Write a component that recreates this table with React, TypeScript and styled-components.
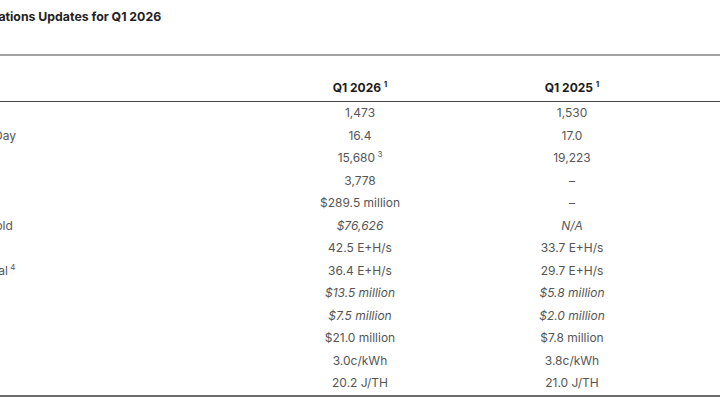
import * as React from "react"
import styled, { createGlobalStyle } from "styled-components"

interface RowType {
  label: string
  labelNote?: string
  current: string
  currentNote?: string
  prior: string
  italic?: boolean
}

const rows: RowType[] = [
  { label: "Bitcoin Mined", current: "1,473", prior: "1,530" },
  { label: "Average Bitcoin Mined Per Day", current: "16.4", prior: "17.0" },
  { label: "Bitcoin Held", current: "15,680", currentNote: "3", prior: "19,223" },
  { label: "Bitcoin Sold", current: "3,778", prior: "–" },
  { label: "Proceeds from Bitcoin Sold", current: "$289.5 million", prior: "–" },
  { label: "Average Price per Bitcoin Sold", current: "$76,626", prior: "N/A", italic: true },
  { label: "Deployed Hash Rate", current: "42.5 E+H/s", prior: "33.7 E+H/s" },
  { label: "Operational Hash Rate – Total", labelNote: "4", current: "36.4 E+H/s", prior: "29.7 E+H/s" },
  { label: "Power Credits", current: "$13.5 million", prior: "$5.8 million", italic: true },
  { label: "Demand Response Credits", current: "$7.5 million", prior: "$2.0 million", italic: true },
  { label: "Total Power Credits", current: "$21.0 million", prior: "$7.8 million" },
  { label: "All-in Power Cost", current: "3.0c/kWh", prior: "3.8c/kWh" },
  { label: "Fleet Efficiency", current: "20.2 J/TH", prior: "21.0 J/TH" }
]

const App = () => (
  <React.Fragment>
    <GlobalStyle />
    <Page>
      <Title>Operations Updates for Q1 2026</Title>
      <TableWrapper>
        <Table>
          <colgroup>
            <col style={{ width: "413px" }} />
            <col style={{ width: "212px" }} />
            <col style={{ width: "212px" }} />
            <col style={{ width: "42px" }} />
          </colgroup>
          <thead>
            <tr>
              <HeadCell />
              <HeadCell>
                Q1 2026 <Note>1</Note>
              </HeadCell>
              <HeadCell>
                Q1 2025 <Note>1</Note>
              </HeadCell>
              <HeadCell />
            </tr>
          </thead>
          <tbody>
            {rows.map(row => (
              <tr key={row.label}>
                <LabelCell>
                  {row.label}
                  {row.labelNote ? <Note> {row.labelNote}</Note> : null}
                </LabelCell>
                <ValueCell italic={row.italic}>
                  {row.current}
                  {row.currentNote ? <Note> {row.currentNote}</Note> : null}
                </ValueCell>
                <ValueCell italic={row.italic}>{row.prior}</ValueCell>
                <ValueCell />
              </tr>
            ))}
          </tbody>
        </Table>
      </TableWrapper>
    </Page>
  </React.Fragment>
)

const GlobalStyle = createGlobalStyle`
  html, body {
    margin: 0;
    padding: 0;
    background: #ffffff;
    overflow: hidden;
  }
  body {
    font-family: Inter, "Liberation Sans", sans-serif;
  }
`

const Page = styled.div`
  width: 720px;
  height: 405px;
  overflow: hidden;
`

const Title = styled.h2`
  margin: 0 0 0 -31px;
  padding-top: 9px;
  font-size: 12.3px;
  line-height: 16px;
  font-weight: 700;
  color: #222222;
`

const TableWrapper = styled.div`
  margin: 29px 0 0 -159px;
  width: 879px;
`

const Table = styled.table`
  width: 879px;
  table-layout: fixed;
  border-collapse: collapse;
  border-top: 2px solid #a3a3a3;
  border-bottom: 2px solid #6b6b6b;
`

const HeadCell = styled.th`
  height: 40px;
  padding: 0 0 5px;
  vertical-align: bottom;
  text-align: center;
  font-size: 12px;
  line-height: 16px;
  font-weight: 700;
  color: #1a1a1a;
  border-bottom: 1px solid #454545;
  white-space: nowrap;
`

const LabelCell = styled.td`
  height: 22.5px;
  padding: 0;
  text-align: left;
  font-size: 12px;
  line-height: 16px;
  color: #555555;
  white-space: nowrap;
`

const ValueCell = styled.td<{ italic?: boolean }>`
  height: 22.5px;
  padding: 0;
  text-align: center;
  font-size: 12px;
  line-height: 16px;
  color: #555555;
  font-style: ${props => (props.italic ? "italic" : "normal")};
  white-space: nowrap;
`

const Note = styled.sup`
  font-size: 8px;
  line-height: 0;
  vertical-align: 5px;
  font-style: normal;
`

export default App
